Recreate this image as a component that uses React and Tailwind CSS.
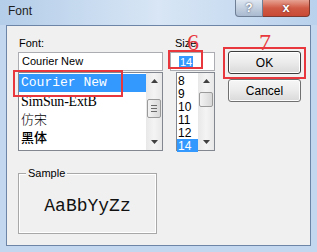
import React from 'react';

const sans = { fontFamily: '"Liberation Sans", Arial, sans-serif' };

const Arrow = ({ up }) => (
  <svg width="7" height="4" viewBox="0 0 7 4" className="block">
    {up ? <path d="M0 4 L3.5 0 L7 4 Z" fill="#404040" /> : <path d="M0 0 L3.5 4 L7 0 Z" fill="#404040" />}
  </svg>
);

const ScrollBar = ({ thumbTop, thumbH, grip }) => (
  <div className="flex h-full w-[16px] flex-col items-center bg-gradient-to-r from-[#e8e8e8] via-[#f4f4f4] to-[#e8e8e8]">
    <div className="flex h-[16px] w-full items-center justify-center">
      <Arrow up />
    </div>
    <div className="relative w-full flex-1">
      <div
        className="absolute left-[1px] right-[1px] flex flex-col items-center justify-center gap-[2px] rounded-[2px] border border-[#9a9a9a] bg-gradient-to-r from-[#f3f3f3] to-[#d8d8d8]"
        style={{ top: thumbTop, height: thumbH }}
      >
        {grip && (
          <>
            <div className="h-px w-[6px] bg-[#6a6a6a]" />
            <div className="h-px w-[6px] bg-[#6a6a6a]" />
            <div className="h-px w-[6px] bg-[#6a6a6a]" />
          </>
        )}
      </div>
    </div>
    <div className="flex h-[16px] w-full items-center justify-center">
      <Arrow />
    </div>
  </div>
);

const Button = ({ children, isDefault }) => (
  <div
    className={`flex h-[23px] w-[73px] items-center justify-center rounded-[3px] border bg-gradient-to-b from-[#f6f6f6] via-[#ebebeb] to-[#d9d9d9] text-[12px] text-black ${
      isDefault ? 'border-[#3c3c3c] shadow-[inset_0_0_0_1px_#ffffff]' : 'border-[#707070] shadow-[inset_0_0_0_1px_#fcfcfc]'
    }`}
    style={sans}
  >
    {children}
  </div>
);

export default function App() {
  const fonts = [
    { name: 'Courier New', font: '"Liberation Mono", "Courier New", monospace', size: 13, sel: true },
    { name: 'SimSun-ExtB', font: '"Liberation Serif", "Noto Sans CJK SC", serif', size: 14, track: '-0.2px' },
    { name: '仿宋', font: '"Noto Sans CJK SC", sans-serif', size: 13, weight: 300 },
    { name: '黑体', font: '"Noto Sans CJK SC", sans-serif', size: 13, weight: 500 },
  ];
  const sizes = ['8', '9', '10', '11', '12', '14'];

  return (
    <div className="relative flex h-[252px] w-[317px] flex-col overflow-hidden bg-[#c3d8ef]" style={sans}>
      {/* title bar */}
      <div className="flex h-[25px] items-start justify-between bg-gradient-to-r from-[#b4cde9] via-[#d8e6f5] to-[#b9d1ec]">
        <div className="pl-[8px] pt-[4px] text-[12px] leading-[15px] text-[#1e1e1e]">Font</div>
        <div className="mr-[7px] flex">
          <div className="flex h-[17px] w-[28px] items-center justify-center rounded-bl-[4px] border border-t-0 border-[#6f7f95] bg-gradient-to-b from-[#dde6f1] to-[#a9b9cf] text-[12px] font-bold text-white [text-shadow:0_0_2px_#334]">
            ?
          </div>
          <div className="flex h-[17px] w-[47px] items-center justify-center rounded-br-[4px] border border-l-0 border-t-0 border-[#7d3a30] bg-gradient-to-b from-[#e7a293] via-[#cf5a45] to-[#c94a36] text-[13px] font-bold text-white [text-shadow:0_0_2px_#522]">
            x
          </div>
        </div>
      </div>

      {/* client area */}
      <div className="mx-[6px] mb-[6px] flex flex-1 gap-[7px] border border-[#6d86a8] bg-[#f0f0f0] pl-[11px] pt-[11px] text-[11px] text-black">
        {/* font column */}
        <div className="flex w-[145px] flex-col">
          <div className="h-[13px] pl-[1px] text-[11px] leading-[13px]">Font:</div>
          <div className="mt-[2px] flex h-[19px] items-center border border-[#abadb3] bg-white pl-[3px] text-[11px]">
            Courier New
          </div>
          <div className="relative mt-px flex h-[79px] border border-[#828790] bg-white">
            <div className="flex flex-1 flex-col overflow-hidden pt-px">
              {fonts.map((f) => (
                <div
                  key={f.name}
                  className={`flex h-[18px] shrink-0 items-center pl-[2px] ${f.sel ? 'bg-[#3399ff] text-white' : 'text-black'}`}
                  style={{ fontFamily: f.font, fontSize: f.size, fontWeight: f.weight, letterSpacing: f.track }}
                >
                  {f.name}
                </div>
              ))}
            </div>
            <ScrollBar thumbTop={10} thumbH={19} grip />
            <div className="absolute left-[-6px] top-[-3px] h-[27px] w-[110px] border-2 border-[#e8383d]" />
          </div>
          <div className="relative mt-[22px] h-[61px] w-[139px] border border-[#a8a8a8] shadow-[inset_0_0_0_1px_#ffffff]">
            <div className="absolute left-[7px] top-[-7px] bg-[#f0f0f0] px-[2px] text-[11px] leading-[13px]">Sample</div>
            <div
              className="flex h-full items-center justify-center pt-[6px] text-[18px] text-[#111]"
              style={{ fontFamily: '"Liberation Mono", "Courier New", monospace' }}
            >
              AaBbYyZz
            </div>
          </div>
        </div>

        {/* size column */}
        <div className="relative flex w-[45px] flex-col">
          <div className="h-[13px] pl-[5px] text-[11px] leading-[13px]">Size</div>
          <div className="mt-[2px] flex h-[19px] items-center border border-[#abadb3] bg-white pl-[8px]">
            <span className="bg-[#3399ff] px-px text-[11px] leading-[12px] text-white">14</span>
          </div>
          <div className="ml-[6px] mt-px flex h-[79px] border border-[#828790] bg-white">
            <div className="flex flex-1 flex-col pt-px">
              {sizes.map((s) => (
                <div
                  key={s}
                  className={`flex h-[13px] items-center pl-px text-[12px] ${s === '14' ? 'bg-[#3399ff] text-white' : ''}`}
                >
                  {s}
                </div>
              ))}
            </div>
            <ScrollBar thumbTop={3} thumbH={15} />
          </div>
          <div className="absolute left-[-2px] top-[13px] h-[19px] w-[35px] border-2 border-[#e8383d]" />
          <div
            className="absolute left-[17px] top-[-7px] text-[24px] leading-[24px] text-[#e8383d]"
            style={{ fontFamily: '"Liberation Serif", "Times New Roman", serif' }}
          >
            6
          </div>
        </div>

        {/* buttons */}
        <div className="relative ml-[6px] flex flex-col gap-[5px] pt-[14px]">
          <Button isDefault>OK</Button>
          <Button>Cancel</Button>
          <div className="absolute left-[-5px] top-[10px] h-[32px] w-[83px] border-2 border-[#e8383d]" />
          <div
            className="absolute left-[31px] top-[-7px] text-[24px] leading-[24px] text-[#e8383d]"
            style={{ fontFamily: '"Liberation Serif", "Times New Roman", serif' }}
          >
            7
          </div>
        </div>
      </div>
    </div>
  );
}
